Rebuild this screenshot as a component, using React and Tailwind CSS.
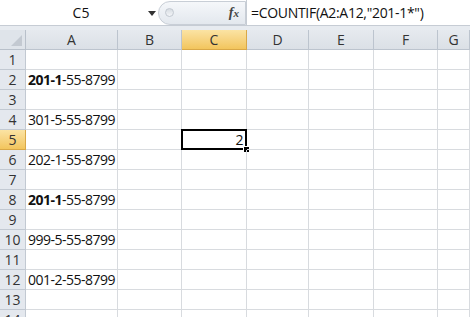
import React from 'react';

const cols = ['A', 'B', 'C', 'D', 'E', 'F', 'G'];
const rows = Array.from({ length: 14 }, (_, i) => i + 1);

const data = {
  2: { bold: '201-1', rest: '-55-8799' },
  4: { rest: '301-5-55-8799' },
  6: { rest: '202-1-55-8799' },
  8: { bold: '201-1', rest: '-55-8799' },
  10: { rest: '999-5-55-8799' },
  12: { rest: '001-2-55-8799' },
};

const font = { fontFamily: '"Open Sans", "Noto Sans", sans-serif' };

export default function App() {
  return (
    <div className="w-[470px] h-[317px] overflow-hidden bg-white text-[#111]" style={font}>
      {/* formula bar */}
      <div className="flex h-[26px] bg-white border-b border-[#c6ccd4]">
        <div className="w-[158px] flex items-center relative">
          <span className="flex-1 text-center text-[14px] pl-[4px]">C5</span>
          <span className="absolute left-[148px] top-[11px] w-0 h-0 border-l-[4px] border-r-[4px] border-t-[5px] border-l-transparent border-r-transparent border-t-[#333]" />
        </div>
        <div className="w-[88px] flex items-center">
          <div className="h-[24px] flex-1 rounded-l-full border border-[#c8ced6] bg-gradient-to-b from-[#f5f7fa] to-[#e3e8ee] flex items-center justify-between pl-[6px] pr-[6px]">
            <span className="w-[9px] h-[9px] rounded-full bg-gradient-to-b from-[#d7dce2] to-[#f3f5f8] border border-[#c2c8d0]" />
            <span className="italic font-bold text-[14px] text-[#444]" style={{ fontFamily: '"Liberation Serif", serif' }}>
              f<span className="text-[11px]">x</span>
            </span>
          </div>
        </div>
        <div className="flex-1 flex items-center border-l border-[#c6ccd4] pl-[4px] text-[14px] tracking-[-0.3px]">
          =COUNTIF(A2:A12,"201-1*")
        </div>
      </div>
      <div className="h-[4px] bg-[#e7ebf0]" />

      {/* grid */}
      <div className="grid grid-cols-[26px_92px_64px_65px_62px_65px_64px_1fr] auto-rows-[20px] text-[14px]">
        <div className="bg-[#dfe4ea] border-r border-b border-[#b8c0ca] relative">
          <svg className="absolute right-[3px] bottom-[3px]" width="11" height="11" viewBox="0 0 11 11">
            <polygon points="11,0 11,11 0,11" fill="#c3c9d1" />
          </svg>
        </div>
        {cols.map((c) => (
          <div
            key={c}
            className={
              c === 'C'
                ? 'bg-gradient-to-b from-[#fbe3a3] to-[#f2c55c] border-r border-b border-[#d9a847] flex items-center justify-center text-[#333]'
                : 'bg-gradient-to-b from-[#e6eaef] to-[#dbe0e6] border-r border-b border-[#bcc4ce] flex items-center justify-center text-[#333]'
            }
          >
            {c}
          </div>
        ))}
        {rows.map((r) => (
          <React.Fragment key={r}>
            <div
              className={
                r === 5
                  ? 'bg-gradient-to-b from-[#fbe3a3] to-[#f2c55c] border-r border-b border-[#d9a847] flex items-center justify-center text-[#333]'
                  : 'bg-[#e4e8ee] border-r border-b border-[#c2c9d2] flex items-center justify-center text-[#333]'
              }
            >
              {r}
            </div>
            {cols.map((c) => (
              <div key={c} className="border-r border-b border-[#d8dbdf] relative flex items-center px-[2px] whitespace-nowrap tracking-[-0.5px]">
                {c === 'A' && data[r] && (
                  <span>
                    {data[r].bold && <b className="font-bold">{data[r].bold}</b>}
                    {data[r].rest}
                  </span>
                )}
                {c === 'C' && r === 5 && (
                  <>
                    <span className="ml-auto pr-[1px]">2</span>
                    <span className="absolute -left-[1px] -top-[1px] -right-[1px] -bottom-[1px] border-2 border-black" />
                    <span className="absolute -right-[4px] -bottom-[4px] w-[7px] h-[7px] bg-black border border-white" />
                  </>
                )}
              </div>
            ))}
          </React.Fragment>
        ))}
      </div>
    </div>
  );
}
